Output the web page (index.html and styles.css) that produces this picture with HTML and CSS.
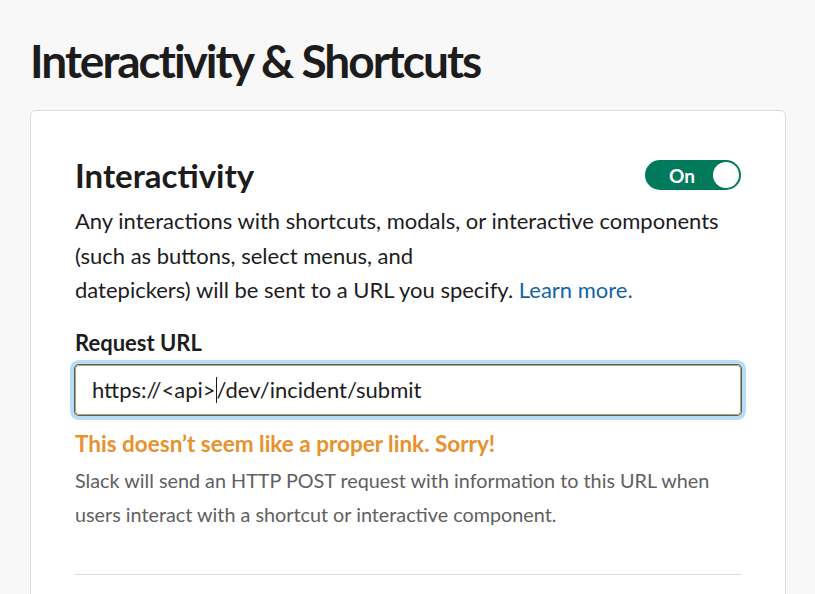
FILE: index.html
```html
<!DOCTYPE html>
<html>
<head>
<meta charset="utf-8">
<link rel="stylesheet" href="styles.css">
</head>
<body>
<div class="page">
  <h1 class="page-title">Interactivity &amp; Shortcuts</h1>
  <div class="card">
    <div class="card-head">
      <h2 class="card-title">Interactivity</h2>
      <div class="toggle"><span class="toggle-label">On</span><span class="toggle-knob"></span></div>
    </div>
    <p class="desc">Any interactions with shortcuts, modals, or interactive components<br>(such as buttons, select menus, and<br>datepickers) will be sent to a URL you specify. <a class="link" href="#">Learn more.</a></p>
    <div class="label">Request URL</div>
    <div class="input"><span>https://&lt;api&gt;</span><span class="caret"></span><span>/dev/incident/submit</span></div>
    <div class="error">This doesn’t seem like a proper link. Sorry!</div>
    <p class="help">Slack will send an HTTP POST request with information to this URL when users interact with a shortcut or interactive component.</p>
    <div class="divider"></div>
  </div>
</div>
</body>
</html>
```
FILE: styles.css
```css
html, body {
  margin: 0;
  padding: 0;
  background: #f8f8f8;
  font-family: Lato, "Noto Sans", sans-serif;
  color: #1d1c1d;
}
.page {
  padding: 35px 30px 0 30px;
}
.page-title {
  margin: 0;
  font-size: 46px;
  font-weight: 700;
  letter-spacing: -2px;
  line-height: 52px;
}
.card {
  margin-top: 23px;
  background: #fff;
  border: 1px solid #dddddd;
  border-radius: 6px;
  padding: 44px 44px 40px 44px;
  width: 666px;
}
.card-head {
  display: flex;
  justify-content: space-between;
  align-items: center;
}
.card-title {
  margin: 0;
  font-size: 33px;
  font-weight: 700;
  line-height: 40px;
}
.toggle {
  width: 96px;
  height: 30px;
  border-radius: 15px;
  background: #007a5a;
  display: flex;
  align-items: center;
  justify-content: space-between;
  box-sizing: border-box;
  padding: 0 2px 0 24px;
}
.toggle-label {
  color: #fff;
  font-weight: 700;
  font-size: 19px;
}
.toggle-knob {
  width: 26px;
  height: 26px;
  border-radius: 50%;
  background: #fff;
}
.desc {
  margin: 9px 0 0 0;
  font-size: 22px;
  line-height: 34.5px;
}
.link {
  color: #1264a3;
  text-decoration: none;
}
.label {
  margin-top: 20px;
  font-size: 22px;
  font-weight: 700;
  line-height: 30px;
}
.input {
  margin-top: 7px;
  height: 50px;
  box-sizing: border-box;
  border: 1px solid #e8912d;
  border-radius: 4px;
  box-shadow: 0 0 0 1px #1d6fa5, 0 0 0 5px #b7dcf3;
  display: flex;
  align-items: center;
  padding-left: 16px;
  font-size: 22px;
  color: #1d1c1d;
}
.caret {
  display: inline-block;
  width: 1px;
  height: 26px;
  background: #1d1c1d;
}
.error {
  margin-top: 16px;
  color: #e8912d;
  font-weight: 700;
  font-size: 22.5px;
  line-height: 26px;
}
.help {
  margin: 6px 0 0 0;
  color: #616061;
  font-size: 19.8px;
  line-height: 34px;
}
.divider {
  margin-top: 43px;
  height: 1px;
  background: #dddddd;
}
```
